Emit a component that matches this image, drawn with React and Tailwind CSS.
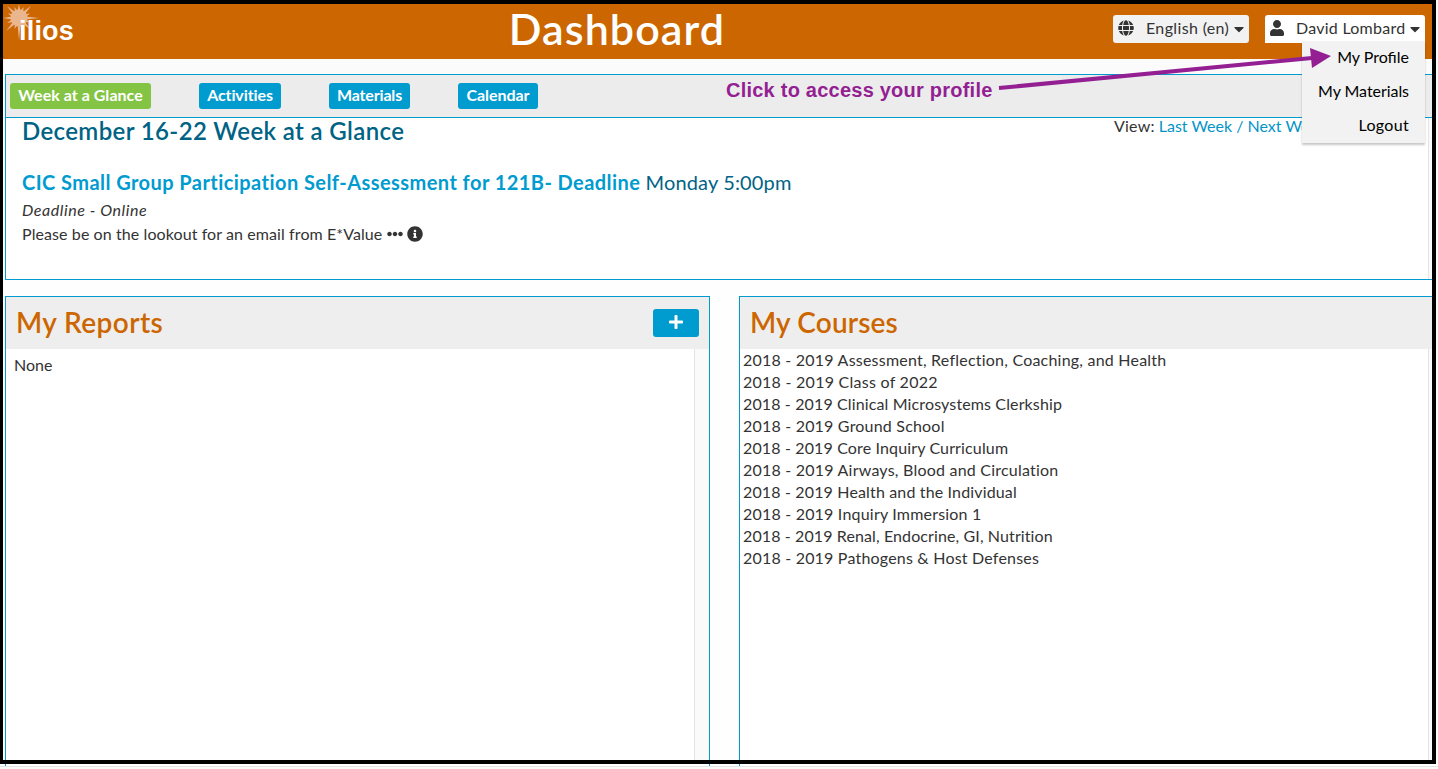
import React from "react";
import { FaGlobe, FaUser, FaCaretDown, FaInfoCircle, FaEllipsisH, FaPlus } from "react-icons/fa";

const courses = [
  { title: "2018 - 2019 Assessment, Reflection, Coaching, and Health", tracking: "tracking-[0.22px]" },
  { title: "2018 - 2019 Class of 2022", tracking: "tracking-[0.26px]" },
  { title: "2018 - 2019 Clinical Microsystems Clerkship", tracking: "tracking-[0.13px]" },
  { title: "2018 - 2019 Ground School", tracking: "tracking-[0.2px]" },
  { title: "2018 - 2019 Core Inquiry Curriculum", tracking: "tracking-[0.14px]" },
  { title: "2018 - 2019 Airways, Blood and Circulation", tracking: "tracking-[0.22px]" },
  { title: "2018 - 2019 Health and the Individual", tracking: "tracking-[0.15px]" },
  { title: "2018 - 2019 Inquiry Immersion 1", tracking: "tracking-[0.2px]" },
  { title: "2018 - 2019 Renal, Endocrine, GI, Nutrition", tracking: "tracking-[0.11px]" },
  { title: "2018 - 2019 Pathogens & Host Defenses", tracking: "tracking-[0.2px]" },
];

const tabs = [
  { label: "Week at a Glance", style: "w-[141px] bg-[#84c444] tracking-[0.03px]" },
  { label: "Activities", style: "w-[82px] bg-[#009bcf] tracking-[-0.1px]" },
  { label: "Materials", style: "w-[81px] bg-[#009bcf] tracking-[-0.15px]" },
  { label: "Calendar", style: "w-[80px] bg-[#009bcf] tracking-[-0.05px]" },
];

const rayLengths = [20, 12, 16, 13, 22, 12, 18, 13, 16, 12, 17, 12, 14, 12, 17, 12];

function Starburst() {
  const rays = rayLengths.map((length, i) => {
    const a = (i * Math.PI) / 8;
    const p = (ang, rad) => `${(16 + Math.cos(ang) * rad).toFixed(1)},${(14 + Math.sin(ang) * rad).toFixed(1)}`;
    return `${p(a - 0.22, 7)} ${p(a, length)} ${p(a + 0.22, 7)}`;
  });
  return (
    <svg className="absolute left-0 top-0 h-[36px] w-[40px]" viewBox="0 0 40 36" fill="#e9b68e">
      <circle cx="16" cy="14" r="8.5" />
      {rays.map((r) => (
        <polygon key={r} points={r} />
      ))}
    </svg>
  );
}

function Header() {
  return (
    <header className="relative flex h-[55px] shrink-0 justify-between bg-[#cc6600]">
      <div className="relative w-[120px]">
        <Starburst />
        <div className="relative pl-[16px] pt-[12px] font-['Liberation_Sans',sans-serif] text-[27px] font-bold leading-[30px] tracking-[0.2px] text-white">
          ilios
        </div>
      </div>
      <h1 className="grow pl-[157px] text-center text-[43px] font-semibold leading-[49px] tracking-[1.1px] text-white">
        Dashboard
      </h1>
      <div className="flex w-[478px] shrink-0 justify-end gap-4 pr-[7px] pt-[11px] text-[16px] text-[#333]">
        <button className="flex h-7 w-[136px] items-center rounded-[3px] bg-[#f2f2f2] pl-[5px]">
          <FaGlobe className="mb-[2px] mr-[12px] h-4 w-4 shrink-0" />
          <span className="w-[85px] whitespace-nowrap pb-[2px] text-left tracking-[0.35px]">English (en)</span>
          <FaCaretDown className="ml-[3px] h-4 w-[10px] shrink-0" />
        </button>
        <div className="relative">
          <button className="flex h-7 w-[160px] items-center rounded-t-[3px] bg-white pl-[5px]">
            <FaUser className="mb-[2px] mr-[12px] h-4 w-[14px] shrink-0" />
            <span className="w-[110px] whitespace-nowrap pb-[2px] text-left tracking-[0.25px]">David Lombard</span>
            <FaCaretDown className="ml-[4px] h-4 w-[10px] shrink-0" />
          </button>
          <ul className="absolute right-0 top-[26px] z-20 h-[102px] w-[123px] bg-[#f2f2f2] pr-4 text-right text-black shadow-[0_2px_2px_rgba(0,0,0,0.22)]">
            <li className="h-[34px] leading-[32px]">My Profile</li>
            <li className="h-[34px] leading-[32px] tracking-[-0.05px]">My Materials</li>
            <li className="h-[34px] leading-[32px] tracking-[0.3px]">Logout</li>
          </ul>
        </div>
      </div>
    </header>
  );
}

function WeekPanel() {
  return (
    <section className="ml-[2px] flex h-[206px] shrink-0 flex-col border-y border-l border-[#009bcf] bg-white">
      <nav className="flex h-[43px] shrink-0 gap-12 border-b border-[#009bcf] bg-[#ececec] pl-1 pt-2">
        {tabs.map((t) => (
          <button
            key={t.label}
            className={`h-[26px] whitespace-nowrap rounded-[3px] text-center text-[16px] font-bold text-white ${t.style}`}
          >
            <span className="block h-[26px] leading-[24px]">{t.label}</span>
          </button>
        ))}
      </nav>
      <div className="flex grow">
        <div className="grow pl-4">
          <div className="flex h-[26px]">
            <h2 className="w-[1092px] text-[24px] font-semibold leading-[25px] tracking-[0.37px] text-[#006385]">
              December 16-22 Week at a Glance
            </h2>
            <p className="whitespace-nowrap text-[16px] leading-[16px]">
              <span className="tracking-[0.2px]">View:</span> <span className="text-[#0594c6]">Last Week / Next Week</span>
            </p>
          </div>
          <h3 className="mt-[25px] text-[20px] leading-[26px] text-[#006385]">
            <b className="font-bold tracking-[0.44px] text-[#009bcf]">
              CIC Small Group Participation Self-Assessment for 121B- Deadline
            </b>{" "}
            <span className="tracking-[0.15px]">Monday 5:00pm</span>
          </h3>
          <p className="mt-[3px] text-[16px] italic leading-[24px] tracking-[0.55px]">Deadline - Online</p>
          <p className="flex items-center text-[16px] leading-[24px]">
            <span className="w-[365px] whitespace-nowrap tracking-[0.09px]">
              Please be on the lookout for an email from E*Value
            </span>
            <FaEllipsisH className="h-4 w-4" />
            <FaInfoCircle className="ml-[4px] h-4 w-4" />
          </p>
        </div>
        <div className="w-1 shrink-0 border-l border-[#e4e4e4] bg-[#fafafa]" />
      </div>
    </section>
  );
}

function Panels() {
  return (
    <div className="ml-[2px] mt-4 flex grow gap-[29px]">
      <section className="flex w-[705px] flex-col border-x border-t border-[#009bcf] bg-white">
        <div className="flex h-[52px] items-center justify-between bg-[#eee] px-[10px]">
          <h2 className="pb-[2px] text-[28px] font-semibold leading-[36px] tracking-[0.4px] text-[#cc6600]">My Reports</h2>
          <button className="flex h-7 w-[46px] items-center justify-center rounded-[3px] bg-[#009bcf] pb-[2px] text-white">
            <FaPlus className="h-4 w-4" />
          </button>
        </div>
        <div className="flex grow justify-between">
          <p className="pl-2 pt-[4px] text-[16px] leading-[24px]">None</p>
          <div className="w-[15px] border-l border-[#e4e4e4] bg-[#fafafa]" />
        </div>
      </section>
      <section className="flex grow flex-col border-l border-t border-[#009bcf] bg-white">
        <div className="flex h-[52px] items-center bg-[#eee] pl-[10px]">
          <h2 className="pb-[2px] text-[28px] font-semibold leading-[36px] tracking-[0.15px] text-[#cc6600]">My Courses</h2>
        </div>
        <div className="flex grow justify-between">
          <ul className="pl-[3px] text-[16px] leading-[22px]">
            {courses.map((c) => (
              <li key={c.title} className={`whitespace-nowrap ${c.tracking}`}>{c.title}</li>
            ))}
          </ul>
          <div className="w-1 border-l border-[#e4e4e4] bg-[#fafafa]" />
        </div>
      </section>
    </div>
  );
}

export default function App() {
  return (
    <div className="relative flex h-[769px] w-[1438px] flex-col overflow-hidden bg-[#fafafa] font-['Lato',sans-serif] text-[#333]">
      <div className="flex h-[764px] w-[1436px] flex-col overflow-hidden border-4 border-l-[3px] border-black bg-[#fefefe]">
        <Header />
        <div className="h-[15px] shrink-0 bg-[#fbfbfb]" />
        <WeekPanel />
        <Panels />
      </div>
      <div className="flex h-[3px] border-b border-[#e4e4e4] bg-white pl-[5px]">
        <div className="w-[705px] border-x border-[#009bcf]" />
        <div className="ml-[29px] border-l border-[#009bcf]" />
      </div>
      <p className="absolute left-[726px] top-[78px] whitespace-nowrap font-['Liberation_Sans',sans-serif] text-[20px] font-bold leading-[24px] tracking-[0.23px] text-[#931f93]">
        Click to access your profile
      </p>
      <svg className="absolute left-[990px] top-[40px] z-30 h-[60px] w-[350px]" viewBox="990 40 350 60">
        <path d="M999 88L1312 58" stroke="#931f93" strokeWidth="4" />
        <polygon points="1310,48 1331,56 1312,68" fill="#931f93" />
      </svg>
    </div>
  );
}
